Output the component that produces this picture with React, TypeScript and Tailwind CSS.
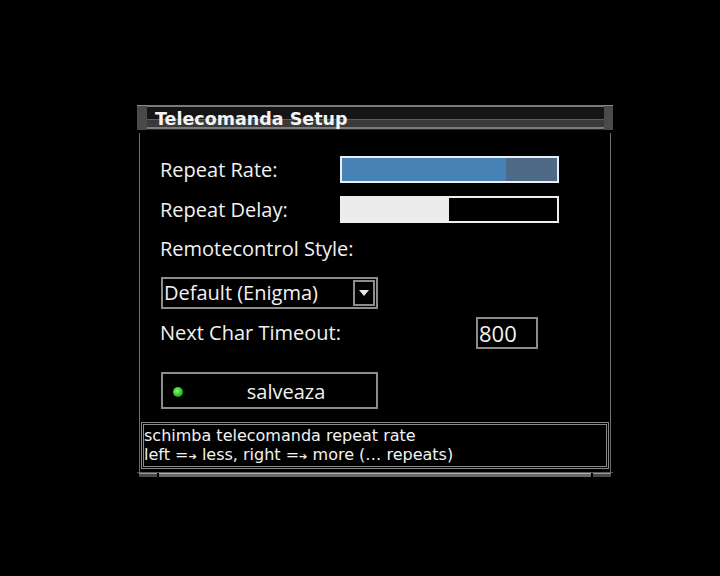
export default function App() {
  const label = "font-['Open_Sans',sans-serif] text-[20px] leading-none text-[#f2f2f2]";
  const arrow = <span className="text-[10px]">➔</span>;

  return (
    <div className="h-[576px] w-[720px] bg-black pl-[137px] pt-[105px]">
      <div className="flex w-[476px] flex-col">
        {/* title bar */}
        <div className="relative flex h-[28px]">
          <div className="h-[25px] w-[10px] border-t border-[#8a8a8a] bg-[#4a4a4a]" />
          <div className="flex flex-1 flex-col">
            <div className="h-[2px] bg-[#7a7a7a]" />
            <div className="h-[12px] bg-[#151515]" />
            <div className="h-[1px] bg-[#5c5c5c]" />
            <div className="h-[7px] bg-[#3a3a3a]" />
            <div className="h-[2px] bg-[#7c7c7c]" />
            <div className="h-[1px] bg-[#262626]" />
          </div>
          <div className="h-[25px] w-[9px] border-t border-[#8a8a8a] bg-[#4a4a4a]" />
          <span className="absolute left-[18px] top-[3px] font-['DejaVu_Sans',sans-serif] text-[17.5px] font-bold leading-[22px] text-[#f4f4f4]">
            Telecomanda Setup
          </span>
        </div>

        {/* body */}
        <div className="mx-[2px] flex h-[339px] flex-col border-x border-[#6e6e6e] pl-[20px]">
          <div className="mt-[23px] flex h-[27px] items-center">
            <div className={`${label} w-[180px]`}>Repeat Rate:</div>
            <div className="flex h-[27px] w-[219px] border-2 border-[#e8eef4]">
              <div className="w-[164px] bg-[#4682b4]" />
              <div className="flex-1 bg-[#4f6a86]" />
            </div>
          </div>

          <div className="mt-[13px] flex h-[27px] items-center">
            <div className={`${label} w-[180px]`}>Repeat Delay:</div>
            <div className="flex h-[27px] w-[219px] border-2 border-[#eeeeee] bg-black">
              <div className="w-[107px] bg-[#ececec]" />
            </div>
          </div>

          <div className="mt-[14px] flex h-[24px] items-center">
            <div className={label}>Remotecontrol Style:</div>
          </div>

          <div className="ml-[1px] mt-[16px] flex h-[32px] w-[217px] items-center border-2 border-[#8c8c8c] px-[1px]">
            <div className={`${label} flex-1`}>Default (Enigma)</div>
            <div className="flex h-[26px] w-[22px] items-center justify-center border-2 border-[#8c8c8c]">
              <svg width="10" height="6" viewBox="0 0 10 6">
                <path d="M0 0 L10 0 L5 6 Z" fill="#e8e8e8" />
              </svg>
            </div>
          </div>

          <div className="mt-[8px] flex h-[32px] items-center">
            <div className={`${label} w-[316px]`}>Next Char Timeout:</div>
            <div className="flex h-[32px] w-[62px] items-center border-2 border-[#8c8c8c] pl-[1px]">
              <span className="font-['Open_Sans',sans-serif] text-[22px] leading-none text-[#f2f2f2]">800</span>
            </div>
          </div>

          <div className="ml-[1px] mt-[23px] flex h-[37px] w-[217px] items-center border-2 border-[#8c8c8c] pt-[2px]">
            <div className="ml-[10px] h-[10px] w-[10px] rounded-full bg-[radial-gradient(circle_at_40%_40%,#7dff6a,#1fa81a_70%)]" />
            <div className={`${label} flex-1 pl-[13px] text-center`}>salveaza</div>
          </div>

          <div className="-ml-[19px] mt-[13px] flex h-[47px] w-[468px] flex-col justify-center border-[3px] border-double border-[#8a8a8a] font-['DejaVu_Sans',sans-serif] text-[16px] leading-[19px] text-[#f2f2f2]">
            <div>schimba telecomanda repeat rate</div>
            <div>
              left ={arrow} less, right ={arrow} more (… repeats)
            </div>
          </div>
        </div>

        {/* bottom bar */}
        <div className="h-[1px] bg-[#5a5a5a]" />
        <div className="flex h-[4px] gap-[2px] px-[2px]">
          <div className="w-[18px] border-t border-[#9a9a9a] bg-[#4a4a4a]" />
          <div className="flex-1 border-t border-[#b0b0b0] bg-[#6a6a6a]" />
          <div className="w-[18px] border-t border-[#9a9a9a] bg-[#4a4a4a]" />
        </div>
      </div>
    </div>
  );
}
